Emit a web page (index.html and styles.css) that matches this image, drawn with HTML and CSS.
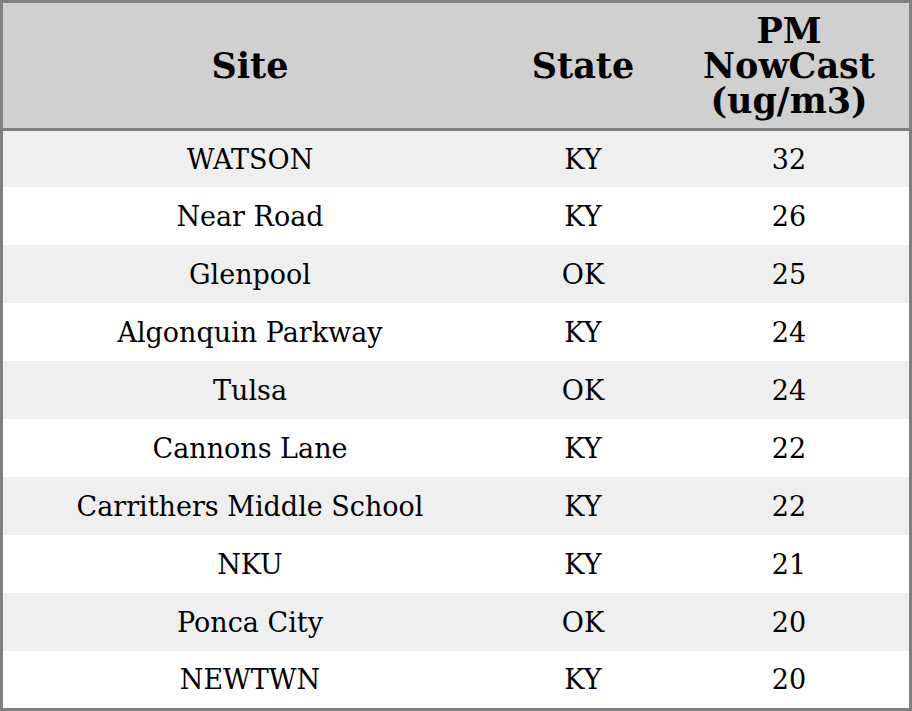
FILE: index.html
```html
<!DOCTYPE html>
<html>
<head>
<meta charset="utf-8">
<link rel="stylesheet" href="styles.css">
</head>
<body>
<table class="aq">
  <colgroup>
    <col class="c-site">
    <col class="c-state">
    <col class="c-pm">
  </colgroup>
  <thead>
    <tr><th>Site</th><th>State</th><th><span class="ln">PM</span><span class="ln">NowCast</span><span class="ln">(ug/m3)</span></th></tr>
  </thead>
  <tbody>
    <tr><td>WATSON</td><td>KY</td><td>32</td></tr>
    <tr><td>Near Road</td><td>KY</td><td>26</td></tr>
    <tr><td>Glenpool</td><td>OK</td><td>25</td></tr>
    <tr><td>Algonquin Parkway</td><td>KY</td><td>24</td></tr>
    <tr><td>Tulsa</td><td>OK</td><td>24</td></tr>
    <tr><td>Cannons Lane</td><td>KY</td><td>22</td></tr>
    <tr><td>Carrithers Middle School</td><td>KY</td><td>22</td></tr>
    <tr><td>NKU</td><td>KY</td><td>21</td></tr>
    <tr><td>Ponca City</td><td>OK</td><td>20</td></tr>
    <tr><td>NEWTWN</td><td>KY</td><td>20</td></tr>
  </tbody>
</table>
</body>
</html>
```
FILE: styles.css
```css
html, body {
  margin: 0;
  padding: 0;
  background: #ffffff;
}
.aq {
  width: 912px;
  border-collapse: separate;
  border-spacing: 0;
  border: 3px solid #808080;
  font-family: "DejaVu Serif", serif;
  color: #000;
  table-layout: fixed;
}
.c-site { width: 494px; }
.c-state { width: 172px; }
.c-pm { width: 240px; }
.aq th {
  background: #d0d0d0;
  font-weight: bold;
  font-size: 35px;
  line-height: 35px;
  height: 125px;
  padding: 0;
  border-bottom: 3px solid #808080;
  text-align: center;
  vertical-align: middle;
}
.ln {
  display: block;
  height: 35px;
  overflow: visible;
}
.aq td {
  font-size: 27px;
  height: 58px;
  padding: 0;
  text-align: center;
  vertical-align: middle;
}
.aq tbody tr:nth-child(odd) td { background: #efefef; }
.aq tbody tr:nth-child(even) td { background: #ffffff; }
.aq tbody tr:first-child td { height: 56px; }
.aq tbody tr:last-child td { height: 57px; }
```
